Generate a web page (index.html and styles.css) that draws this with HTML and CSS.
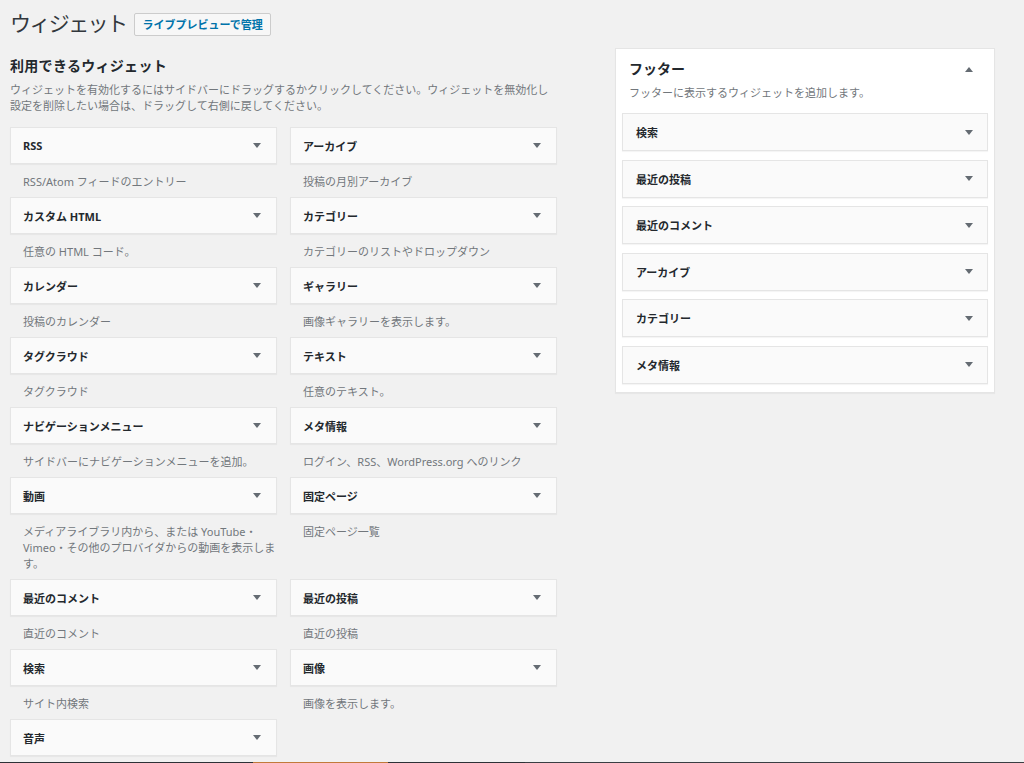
FILE: index.html
```html
<!DOCTYPE html>
<html lang="ja">
<head>
<meta charset="utf-8">
<title>ウィジェット</title>
<link rel="stylesheet" href="styles.css">
</head>
<body>
<div class="wrap">
  <div class="page-head">
    <h1 class="page-title">ウィジェット</h1>
    <a class="btn" href="#">ライブプレビューで管理</a>
  </div>
  <div class="cols">
    <div class="available">
      <h2 class="sec-title">利用できるウィジェット</h2>
      <p class="intro">ウィジェットを有効化するにはサイドバーにドラッグするかクリックしてください。ウィジェットを無効化し設定を削除したい場合は、ドラッグして右側に戻してください。</p>
      <div class="grid">
        <div class="widget"><div class="w-top"><span>RSS</span><i class="arrow"></i></div><div class="w-desc">RSS/Atom フィードのエントリー</div></div>
        <div class="widget"><div class="w-top"><span>アーカイブ</span><i class="arrow"></i></div><div class="w-desc">投稿の月別アーカイブ</div></div>
        <div class="widget"><div class="w-top"><span>カスタム HTML</span><i class="arrow"></i></div><div class="w-desc">任意の HTML コード。</div></div>
        <div class="widget"><div class="w-top"><span>カテゴリー</span><i class="arrow"></i></div><div class="w-desc">カテゴリーのリストやドロップダウン</div></div>
        <div class="widget"><div class="w-top"><span>カレンダー</span><i class="arrow"></i></div><div class="w-desc">投稿のカレンダー</div></div>
        <div class="widget"><div class="w-top"><span>ギャラリー</span><i class="arrow"></i></div><div class="w-desc">画像ギャラリーを表示します。</div></div>
        <div class="widget"><div class="w-top"><span>タグクラウド</span><i class="arrow"></i></div><div class="w-desc">タグクラウド</div></div>
        <div class="widget"><div class="w-top"><span>テキスト</span><i class="arrow"></i></div><div class="w-desc">任意のテキスト。</div></div>
        <div class="widget"><div class="w-top"><span>ナビゲーションメニュー</span><i class="arrow"></i></div><div class="w-desc">サイドバーにナビゲーションメニューを追加。</div></div>
        <div class="widget"><div class="w-top"><span>メタ情報</span><i class="arrow"></i></div><div class="w-desc">ログイン、RSS、WordPress.org へのリンク</div></div>
        <div class="widget"><div class="w-top"><span>動画</span><i class="arrow"></i></div><div class="w-desc">メディアライブラリ内から、または YouTube・<br>Vimeo・その他のプロバイダからの動画を表示しま<br>す。</div></div>
        <div class="widget"><div class="w-top"><span>固定ページ</span><i class="arrow"></i></div><div class="w-desc">固定ページ一覧</div></div>
        <div class="widget"><div class="w-top"><span>最近のコメント</span><i class="arrow"></i></div><div class="w-desc">直近のコメント</div></div>
        <div class="widget"><div class="w-top"><span>最近の投稿</span><i class="arrow"></i></div><div class="w-desc">直近の投稿</div></div>
        <div class="widget"><div class="w-top"><span>検索</span><i class="arrow"></i></div><div class="w-desc">サイト内検索</div></div>
        <div class="widget"><div class="w-top"><span>画像</span><i class="arrow"></i></div><div class="w-desc">画像を表示します。</div></div>
        <div class="widget"><div class="w-top"><span>音声</span><i class="arrow"></i></div></div>
      </div>
    </div>
    <div class="sidebars">
      <div class="panel">
        <div class="panel-head">
          <h2 class="panel-title">フッター</h2>
          <i class="arrow up"></i>
        </div>
        <p class="panel-desc">フッターに表示するウィジェットを追加します。</p>
        <div class="panel-list">
          <div class="s-widget"><span>検索</span><i class="arrow"></i></div>
          <div class="s-widget"><span>最近の投稿</span><i class="arrow"></i></div>
          <div class="s-widget"><span>最近のコメント</span><i class="arrow"></i></div>
          <div class="s-widget"><span>アーカイブ</span><i class="arrow"></i></div>
          <div class="s-widget"><span>カテゴリー</span><i class="arrow"></i></div>
          <div class="s-widget"><span>メタ情報</span><i class="arrow"></i></div>
        </div>
      </div>
    </div>
  </div>
</div>
<div class="taskbar"></div>
</body>
</html>
```

FILE: styles.css
```css
html, body {
  margin: 0;
  padding: 0;
  background: #f1f1f1;
  height: 100%;
  overflow: hidden;
}
body {
  font-family: "Noto Sans", "Noto Sans CJK JP", sans-serif;
  color: #23282d;
  font-size: 11px;
}
.wrap {
  padding: 9px 0 0 10px;
}
.page-head {
  display: flex;
  align-items: center;
  height: 28px;
}
.page-title {
  margin: 0;
  font-size: 21px;
  font-weight: 400;
  letter-spacing: -1.6px;
  line-height: 28px;
  color: #32373c;
}
.btn {
  margin-left: 8px;
  margin-top: 3px;
  display: inline-block;
  height: 23px;
  box-sizing: border-box;
  padding: 0 7px;
  line-height: 21px;
  border: 1px solid #ccc;
  border-radius: 2px;
  background: #f7f7f7;
  color: #0073aa;
  font-size: 11px;
  font-weight: 700;
  text-decoration: none;
}
.cols {
  display: flex;
  align-items: flex-start;
  margin-top: 11px;
}
.available {
  width: 547px;
}
.sec-title {
  margin: 9px 0 0;
  font-size: 14px;
  font-weight: 700;
  letter-spacing: 0.3px;
  line-height: 18px;
}
.intro {
  margin: 7px 0 0;
  font-size: 11px;
  line-height: 16px;
  color: #72777c;
}
.grid {
  margin-top: 13px;
  display: grid;
  grid-template-columns: 267px 267px;
  column-gap: 13px;
}
.w-top {
  display: flex;
  align-items: center;
  justify-content: space-between;
  height: 37px;
  box-sizing: border-box;
  padding: 0 15px 0 12px;
  background: #fafafa;
  border: 1px solid #e5e5e5;
  box-shadow: 0 1px 1px rgba(0, 0, 0, 0.04);
  font-size: 11px;
  font-weight: 700;
}
.w-desc {
  padding: 10px 8px 7px 13px;
  font-size: 11px;
  line-height: 16px;
  color: #72777c;
  white-space: nowrap;
}
.arrow {
  display: block;
  width: 0;
  height: 0;
  border-left: 4px solid transparent;
  border-right: 4px solid transparent;
  border-top: 5px solid #646b72;
}
.arrow.up {
  border-top: 0;
  border-bottom: 5px solid #646b72;
}
.sidebars {
  margin-left: 58px;
  width: 380px;
}
.panel {
  background: #fff;
  border: 1px solid #e5e5e5;
  box-shadow: 0 1px 1px rgba(0, 0, 0, 0.04);
  padding: 11px 6px 8px;
}
.panel-head {
  display: flex;
  align-items: center;
  justify-content: space-between;
  padding: 0 15px 0 7px;
}
.panel-title {
  margin: 0;
  font-size: 14px;
  font-weight: 700;
  line-height: 18px;
}
.panel-desc {
  margin: 7px 0 0 7px;
  font-size: 11px;
  line-height: 16px;
  color: #72777c;
}
.panel-list {
  margin-top: 12px;
  display: flex;
  flex-direction: column;
  gap: 8.5px;
}
.s-widget {
  display: flex;
  align-items: center;
  justify-content: space-between;
  height: 38px;
  box-sizing: border-box;
  padding: 0 14px 0 13px;
  background: #fafafa;
  border: 1px solid #e5e5e5;
  box-shadow: 0 1px 1px rgba(0, 0, 0, 0.04);
  font-size: 11px;
  font-weight: 700;
}
.taskbar {
  position: fixed;
  left: 0;
  right: 0;
  bottom: 0;
  height: 1px;
  background: linear-gradient(to right, #2d3136 0, #2d3136 253px, #c27a3a 253px, #c27a3a 388px, #2d3136 388px, #2d3136 525px, #3a3e43 525px);
}
```
